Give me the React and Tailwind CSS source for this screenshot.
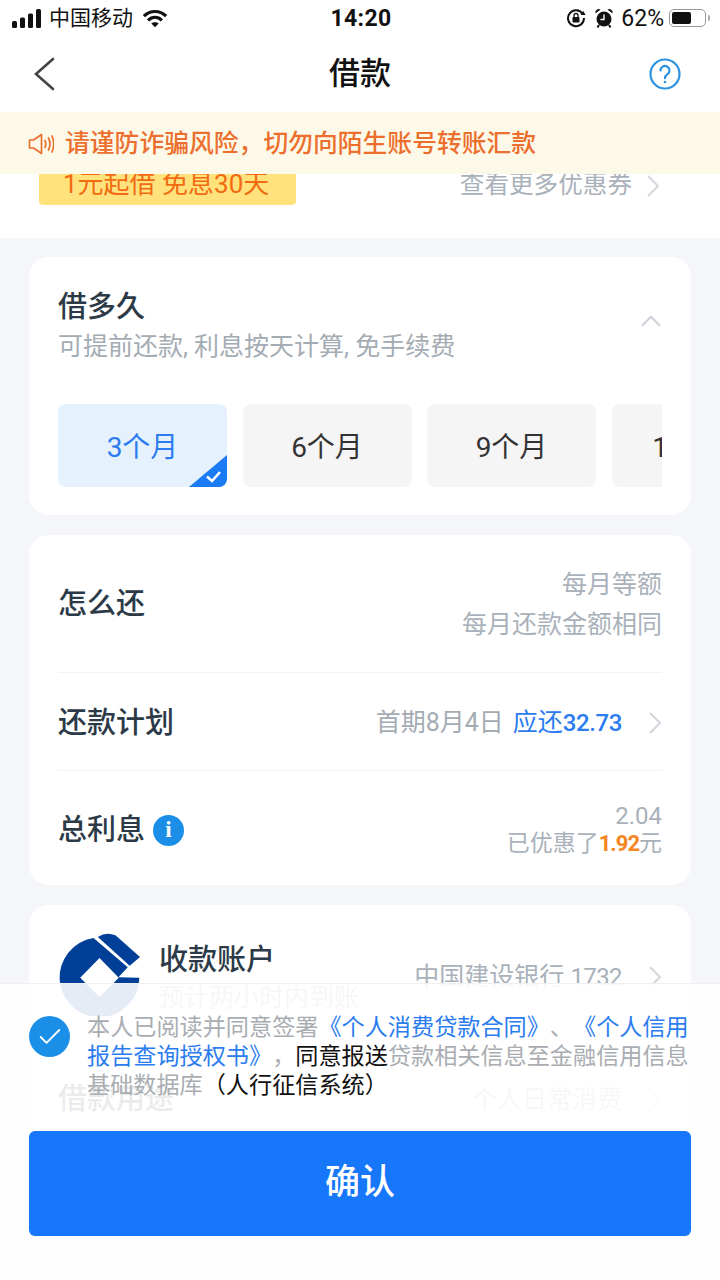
import React from "react";
import { ChevronUp, Check } from "lucide-react";

const Arrow = () => (
  <svg width="14" height="24" viewBox="0 0 14 24" fill="none" stroke="#d3d7dc" strokeWidth="2" className="shrink-0">
    <path d="M2 2L12 12L2 22" />
  </svg>
);

const StatusBar = () => (
  <div className="h-[36px] pl-[12px] pr-[10px] flex items-center justify-between text-[21px] text-[#111] leading-none">
    <div className="flex items-center w-[200px]">
      <svg width="31" height="19" viewBox="0 0 31 19" className="mr-[6px]" fill="#111">
        <rect x="0" y="12" width="5" height="7" rx="1.5" />
        <rect x="8" y="8.5" width="5" height="10.5" rx="1.5" />
        <rect x="16" y="4.5" width="5" height="14.5" rx="1.5" />
        <rect x="24" y="0" width="5" height="19" rx="1.5" />
      </svg>
      <span>中国移动</span>
      <svg width="26" height="19" viewBox="0 0 28 20" className="ml-[9px]" fill="none" stroke="#111" strokeWidth="3.4">
        <path d="M2 7.5 C9 0.8 19 0.8 26 7.5" />
        <path d="M6.5 12 C11 7.8 17 7.8 21.5 12" />
        <path d="M14 19.5 L10 15.5 C12 13.7 16 13.7 18 15.5 Z" fill="#111" stroke="none" />
      </svg>
    </div>
    <span className="font-bold text-[23px] tracking-[0.3px]">14:20</span>
    <div className="flex items-center justify-end w-[200px]">
      <svg width="20" height="20" viewBox="0 0 20 20" fill="none" stroke="#111" strokeWidth="2">
        <path d="M16.8 6A8 8 0 1 0 18 10" />
        <path d="M14.5 7h5l-2-4z" fill="#111" stroke="none" />
        <rect x="6.5" y="9" width="7" height="5.5" rx="0.8" fill="#111" stroke="none" />
        <path d="M8 9V7.5a2 2 0 0 1 4 0V9" strokeWidth="1.3" />
      </svg>
      <svg width="20" height="20" viewBox="0 0 20 20" className="ml-[8px]" fill="#111">
        <circle cx="10" cy="11" r="7.5" />
        <path d="M1.5 5.5A3.5 3.5 0 0 1 6.5 1.5ZM18.5 5.5A3.5 3.5 0 0 0 13.5 1.5Z" />
        <path d="M10 6.5V11.5H6.5" fill="none" stroke="#fff" strokeWidth="1.4" />
        <path d="M5 17 3.5 19.5M15 17 16.5 19.5" stroke="#111" strokeWidth="2" />
      </svg>
      <span className="ml-[7px] text-[23px]">62%</span>
      <div className="ml-[5px] mr-[4px] w-[37px] h-[18px] rounded-[5px] border border-[#999] p-[2px] relative">
        <div className="h-full w-[60%] bg-[#111] rounded-[2px]" />
        <div className="absolute right-[-5px] top-[5px] w-[2px] h-[6px] rounded-r bg-[#aaa]" />
      </div>
    </div>
  </div>
);

const NavBar = () => (
  <div className="h-[76px] flex items-center justify-between pl-[34px] pr-[39px] relative">
    <svg width="21" height="34" viewBox="0 0 21 34" fill="none" stroke="#444" strokeWidth="2.6" strokeLinecap="round">
      <path d="M19 2L2 17L19 32" />
    </svg>
    <h1 className="absolute inset-x-0 text-center text-[31px] font-medium text-[#111]">借款</h1>
    <svg width="32" height="32" viewBox="0 0 32 32" fill="none" stroke="#2a92e0" strokeWidth="2.2">
      <circle cx="16" cy="16" r="14.5" />
      <path d="M11.5 12.5a4.5 4.5 0 1 1 7 3.7c-1.6 1.1-2.5 2-2.5 4" strokeLinecap="round" />
      <circle cx="16" cy="24" r="1.3" fill="#2a92e0" stroke="none" />
    </svg>
  </div>
);

const Notice = () => (
  <div className="h-[62px] bg-[#fdf9e9] flex items-center pl-[28px] pt-[2px] text-[24.8px] font-medium text-[#ec6f2d] leading-none relative z-10">
    <svg width="26" height="24" viewBox="0 0 26 24" fill="none" stroke="#ec6f2d" strokeWidth="1.7" className="mr-[11px] shrink-0">
      <path d="M1.5 8v8h4l8 5.5V2.5l-8 5.5z" strokeLinejoin="round" />
      <path d="M17 8.5c1 2.2 1 4.8 0 7M20.5 6c1.8 3.6 1.8 8.4 0 12M24 4c2.2 5 2.2 11 0 16" strokeLinecap="round" />
    </svg>
    <span>请谨防诈骗风险，切勿向陌生账号转账汇款</span>
  </div>
);

const CouponStrip = () => (
  <div className="h-[64px] bg-white overflow-hidden flex items-start justify-between pl-[39px] pr-[60px]">
    <div className="w-[257px] h-[31px] bg-[#ffe27c] rounded-b-[4px] text-[#f26b12] text-[26px] leading-[20px] pl-[24px] overflow-hidden whitespace-nowrap">
      1元起借 免息30天
    </div>
    <div className="flex items-center text-[24.6px] text-[#a9b1ba] leading-none">
      <span className="mt-[-2px]">查看更多优惠券</span>
      <div className="ml-[14px]"><Arrow /></div>
    </div>
  </div>
);

const DurationCard = () => (
  <div className="bg-white rounded-[20px] h-[258px] px-[29px] pt-[30px]">
    <div className="flex justify-between items-start">
      <div>
        <div className="text-[29px] leading-[40px] font-medium text-[#2c3a47]">借多久</div>
        <div className="text-[25px] leading-[38px] mt-[1px] text-[#a3abb3]">可提前还款, 利息按天计算, 免手续费</div>
      </div>
      <ChevronUp size={34} strokeWidth={1.5} className="text-[#cdd2d8] mt-[17px] -mr-[6px]" />
    </div>
    <div className="flex gap-[15.5px] mt-[38px] overflow-hidden text-[28px] text-[#333]">
      <div className="w-[169px] h-[83px] pt-[5px] shrink-0 bg-[#e6f1fe] text-[#2b7cf0] rounded-[8px] flex items-center justify-center relative overflow-hidden">
        3个月
        <svg width="38" height="32" viewBox="0 0 38 32" className="absolute right-0 bottom-0">
          <path d="M38 0V32H0Z" fill="#1a7bf5" />
          <path d="M18 21.5l5 4.5 8-9" fill="none" stroke="#fff" strokeWidth="2.6" />
        </svg>
      </div>
      <div className="w-[169px] h-[83px] pt-[5px] shrink-0 bg-[#f5f5f5] rounded-[8px] flex items-center justify-center">6个月</div>
      <div className="w-[169px] h-[83px] pt-[5px] shrink-0 bg-[#f5f5f5] rounded-[8px] flex items-center justify-center">9个月</div>
      <div className="w-[169px] h-[83px] pt-[5px] shrink-0 bg-[#f5f5f5] rounded-[8px] flex items-center justify-center">12个月</div>
    </div>
  </div>
);

const RepayCard = () => (
  <div className="bg-white rounded-[20px] mt-[20px] h-[350px] px-[29px] text-[29px] font-medium text-[#2c3a47]">
    <div className="h-[138px] pt-[2px] border-b border-[#f2f3f5] flex items-center justify-between">
      <span className="mt-[1px]">怎么还</span>
      <div className="text-right text-[25px] font-normal leading-[40px] text-[#a9b1ba]">
        <div>每月等额</div>
        <div>每月还款金额相同</div>
      </div>
    </div>
    <div className="h-[98px] pt-[3px] border-b border-[#f2f3f5] flex items-center justify-between">
      <span className="mt-[2px]">还款计划</span>
      <div className="flex items-center text-[25px] font-normal text-[#a3abb3]">
        <span>首期8月4日</span>
        <span className="text-[#2b7cf0] ml-[9px]">应还<span className="text-[24px] font-medium tracking-[-0.4px]">32.73</span></span>
        <div className="ml-[26px]"><Arrow /></div>
      </div>
    </div>
    <div className="h-[114px] pt-[4px] flex items-center justify-between">
      <div className="flex items-center">
        <span className="mt-[2px]">总利息</span>
        <div className="ml-[8px] w-[31px] h-[31px] rounded-full bg-[#1b8fe8] text-white font-['Liberation_Serif',serif] font-bold text-[23px] flex items-center justify-center">i</div>
      </div>
      <div className="text-right text-[23px] font-normal leading-[28px] text-[#a9b1ba]">
        <div className="text-[24px]">2.04</div>
        <div>已优惠了<span className="text-[#f5851f] text-[22px] font-bold tracking-[-1px]">1.92</span>元</div>
      </div>
    </div>
  </div>
);

// bank mark: round body, white diamond, and the folded flap at the upper right
const BankLogo = () => (
  <svg width="83" height="83" viewBox="25 25 250 250" className="shrink-0">
    <path d="M132 40L235 128L207 158L270 160A120 120 0 1 1 132 40Z" fill="#003f98" />
    <path d="M150 100L208 160L150 218L92 160Z" fill="#fff" />
    <path d="M145 37Q170 20 198 32L272 97L241 124Z" fill="#003f98" />
  </svg>
);

const AccountCard = () => (
  <div className="bg-white rounded-[20px] mt-[20px] h-[330px] px-[29px] text-[29px] font-medium text-[#2c3a47]">
    <div className="h-[140px] flex items-start justify-between pt-[28px]">
      <div className="flex items-start">
        <BankLogo />
        <div className="ml-[18px]">
          <div className="leading-[40px] mt-[7px]">收款账户</div>
          <div className="text-[25px] font-normal leading-[38px] text-[#a3abb3] mt-[-1px]">预计两小时内到账</div>
        </div>
      </div>
      <div className="flex items-center text-[25px] font-normal text-[#a9b1ba] mt-[25px]">
        <span>中国建设银行 <span className="text-[24px] tracking-[-0.6px]">1732</span></span>
        <div className="ml-[26px]"><Arrow /></div>
      </div>
    </div>
    <div className="h-[106px] pt-[3px] flex items-center justify-between">
      <span>借款用途</span>
      <div className="flex items-center text-[25px] font-normal text-[#a9b1ba]">
        <span>个人日常消费</span>
        <div className="ml-[26px]"><Arrow /></div>
      </div>
    </div>
  </div>
);

const ConfirmPanel = () => (
  <div className="absolute left-0 right-0 bottom-0 h-[297px] bg-white/90 border-t border-[#f0f0f0] px-[29px] pt-[29px]">
    <div className="flex items-start h-[118px]">
      <div className="w-[41px] h-[41px] mt-[3px] rounded-full bg-[#1b8fe8] flex items-center justify-center shrink-0">
        <Check size={28} strokeWidth={1.6} className="text-white" />
      </div>
      <p className="ml-[17px] text-[23.15px] leading-[29px] text-[#a9adb2] w-[610px] [text-spacing-trim:space-all]">
        本人已阅读并同意签署<span className="text-[#2b7cf0]">《个人消费贷款合同》</span>、<span className="text-[#2b7cf0]">《个人信用报告查询授权书》</span>，<span className="text-[#111]">同意报送</span>贷款相关信息至金融信用信息基础数据库<span className="text-[#111]">（人行征信系统）</span>
      </p>
    </div>
    <button className="w-full h-[105px] bg-[#1677fb] rounded-[6px] text-white text-[35px] font-medium">确认</button>
  </div>
);

const App = () => {
  return (
    <div className="w-[720px] h-[1280px] relative overflow-hidden bg-[#f5f6f9] font-['Roboto','Noto_Sans_CJK_SC',sans-serif]">
      <div className="bg-white">
        <StatusBar />
        <NavBar />
      </div>
      <Notice />
      <CouponStrip />
      <div className="px-[29px] pt-[19px]">
        <DurationCard />
        <RepayCard />
        <AccountCard />
      </div>
      <ConfirmPanel />
    </div>
  );
};

export default App;
